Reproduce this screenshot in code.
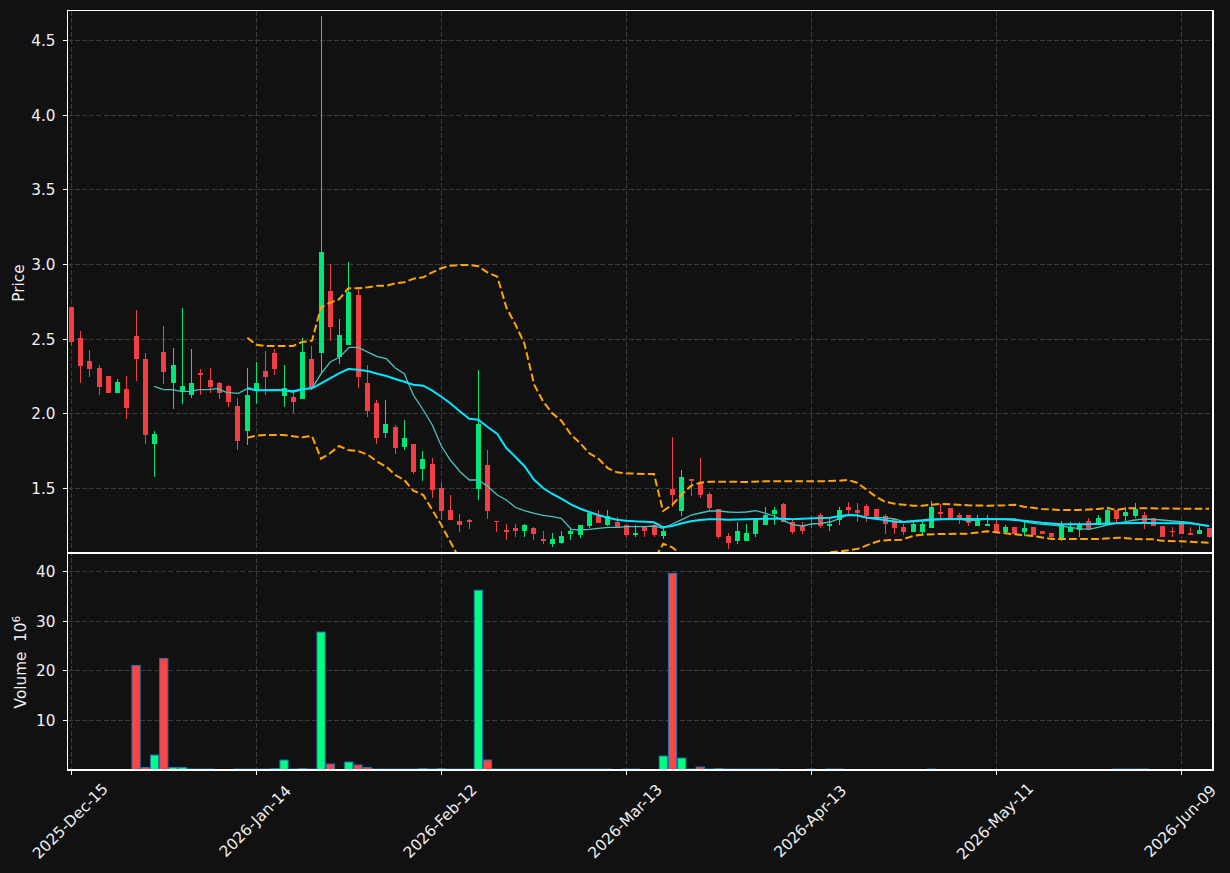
// OHLC-style chart drawn in screen pixels: [up, bodyTop, bodyBottom, wickTop, wickBottom]
const candles = [
  [0, 307, 342, 307, 345], [0, 338, 366, 331, 383], [0, 361, 369, 350, 377], [0, 368, 387, 365, 395],
  [0, 376, 393, 376, 393], [1, 382, 393, 379, 393], [0, 389, 408, 376, 419], [0, 336, 359, 310, 381],
  [0, 359, 435, 353, 444], [1, 434, 444, 431, 477], [0, 352, 372, 326, 384], [1, 365, 383, 348, 409],
  [1, 386, 392, 308, 404], [1, 383, 395, 349, 398], [0, 373, 375, 369, 395], [0, 380, 387, 368, 393],
  [0, 383, 393, 382, 399], [0, 386, 402, 385, 407], [0, 406, 441, 398, 450], [1, 395, 431, 368, 445],
  [1, 383, 391, 362, 404], [0, 371, 377, 351, 395], [0, 353, 369, 349, 375], [1, 388, 396, 365, 407],
  [0, 397, 402, 392, 413], [1, 352, 399, 338, 399], [0, 359, 388, 346, 390], [1, 252, 353, 16, 373],
  [0, 291, 327, 264, 341], [1, 335, 357, 319, 364], [1, 292, 345, 262, 345], [0, 295, 377, 287, 388],
  [0, 383, 411, 365, 417], [0, 403, 438, 400, 444], [1, 424, 433, 400, 438], [0, 427, 448, 425, 454],
  [1, 438, 447, 420, 450], [0, 444, 472, 444, 474], [1, 459, 469, 451, 481], [0, 464, 490, 458, 498],
  [0, 488, 511, 483, 520], [0, 510, 520, 495, 520], [0, 521, 525, 514, 532], [0, 520, 522, 519, 529],
  [1, 424, 489, 370, 500], [0, 465, 511, 450, 519], [0, 521, 522, 521, 532], [0, 530, 532, 524, 540],
  [0, 528, 531, 524, 537], [1, 525, 531, 524, 537], [0, 528, 534, 527, 540], [0, 539, 541, 531, 544],
  [1, 539, 544, 533, 547], [1, 536, 543, 531, 544], [1, 531, 534, 529, 540], [1, 525, 535, 525, 538],
  [1, 513, 526, 512, 528], [0, 516, 523, 510, 523], [1, 516, 525, 510, 526], [0, 522, 528, 517, 528],
  [0, 525, 535, 525, 537], [1, 533, 535, 525, 537], [0, 526, 531, 526, 537], [0, 525, 535, 524, 537],
  [1, 531, 536, 526, 539], [0, 489, 495, 437, 507], [1, 477, 511, 470, 516], [0, 479, 481, 479, 496],
  [0, 483, 495, 458, 498], [0, 494, 508, 492, 510], [0, 509, 537, 509, 539], [0, 536, 543, 533, 549],
  [1, 531, 541, 522, 544], [1, 533, 541, 524, 541], [1, 519, 534, 519, 537], [1, 515, 525, 507, 525],
  [1, 510, 514, 507, 525], [0, 504, 522, 503, 522], [0, 522, 532, 520, 534], [0, 526, 531, 522, 534],
  [0, 518, 519, 516, 528], [0, 515, 526, 513, 528], [1, 524, 526, 518, 531], [1, 510, 520, 507, 525],
  [0, 507, 510, 502, 514], [0, 510, 513, 503, 522], [0, 506, 516, 504, 522], [0, 509, 518, 509, 518],
  [0, 516, 524, 514, 534], [0, 519, 528, 519, 534], [0, 527, 532, 524, 535], [1, 524, 532, 522, 532],
  [1, 524, 532, 522, 534], [1, 507, 528, 501, 528], [0, 512, 514, 504, 518], [0, 508, 519, 508, 519],
  [0, 515, 519, 513, 524], [0, 515, 523, 515, 526], [1, 519, 526, 515, 526], [1, 524, 526, 515, 526],
  [0, 524, 532, 520, 532], [1, 527, 532, 525, 534], [0, 527, 534, 527, 534], [1, 528, 532, 522, 536],
  [0, 527, 535, 527, 535], [0, 531, 534, 531, 534], [0, 533, 537, 533, 540], [1, 525, 538, 521, 541],
  [1, 527, 532, 522, 532], [1, 525, 530, 522, 537], [0, 521, 529, 518, 530], [1, 518, 525, 515, 525],
  [1, 510, 525, 508, 525], [0, 510, 519, 510, 522], [1, 512, 516, 507, 521], [1, 509, 516, 503, 518],
  [0, 515, 523, 512, 529], [0, 518, 526, 518, 526], [0, 526, 537, 526, 537], [0, 531, 532, 527, 537],
  [0, 521, 534, 521, 534], [0, 533, 535, 527, 535], [1, 530, 534, 526, 534], [0, 528, 537, 528, 538],
];

const thinLine = "154.3,386.3 163.3,389.7 172.3,389.7 181.3,391.3 190.3,391.3 199.3,389.7 208.3,389.7 217.3,388.7 226.3,392.3 238.3,393.3 247.3,388.7 256.3,390.3 265.3,390.3 275,390.3 284,390.3 293,392.3 302.3,389.3 312.3,387.7 321.3,373.3 330.3,362 339.3,357.3 349.3,347.3 358.3,347.3 368.3,352.3 377.3,356.7 386.3,358.7 395.3,368 404.3,373.7 413.3,395 423.3,410 432.3,425 441.3,446 450.3,460 460.3,472 469.3,480 478.3,480 487.3,486 497.3,495 506.3,500 515.3,507.3 524.3,510.7 534.3,513.3 543.3,515.3 552.3,516.7 561.3,518.3 571.3,529.3 580.3,530 589.3,529.3 598.3,528.3 608.3,527.3 617.3,527.3 626.3,526.7 635.3,526.7 645.3,526.7 654.3,526 663.3,528.3 672.3,524 682.3,519.3 691.3,515 700.3,513 709.3,511 719,511 728.3,512 737.3,512.3 746.3,512 756,510.7 765.3,513.3 774.3,516 783.3,520.7 792.7,524.7 802.3,526 811.3,524 820.3,523.3 830,522 839.3,518.7 848,515 857,515.7 866.8,517.7 876,517.7 885,517.7 894.5,519 903.8,521.7 913,520.7 922,520 931.5,519 941,519 950,519 959,519 968,520.7 978,520 987,519 996,519 1005,519 1015,519 1024,521.7 1033,523.3 1042,524.3 1052,525 1061,526 1070,527.3 1079,528.7 1089,529.3 1098,527.3 1107,525 1116,523.3 1126,521.7 1135,520 1144,519 1153,519.3 1162,520 1172,521 1181,521.7 1190,522.3 1199,524.3 1209,526";

const thickLine = "247.3,388 256.3,390.3 265,390.3 275,390 284,390.3 293,391.3 302,389.3 312,388.3 321,383.3 330,378.3 339,373.3 348.3,369 358,369.7 368.3,371.3 377.3,373.7 386.3,376 395.3,379 404.3,381.7 413.3,384.7 423.3,385.7 432.3,390.7 441.3,396.7 450.3,403.3 460.3,411.7 469.3,418.7 478.3,419.7 487.3,426.7 497.3,434 506.3,448 515.3,456.7 524.3,466 534.3,480 543.3,488.3 552.3,494 561.3,498.7 571.3,504.7 580.3,508.7 589.3,512 598,515 608,517.7 617,519.7 626,520.7 635,521.3 645,521.7 654,522.3 663,527.3 672,526 682,523.3 691,521.3 700,520 709,519.3 719,519.3 728,519.7 746,519.3 765,518.7 783,518.7 793,519.3 802,518.7 820,518 830,517.7 839,516.3 848,515 857,515.3 867,517.7 885,520 894.5,521.7 904,522 922,520.7 941,519.3 968,519 1005,519.3 1024,520.7 1042,522.7 1061,524.3 1089,524.3 1116,523.3 1144,523 1172,523.3 1190,523.3 1209,526";

const upperBand = "247.3,337.7 256.3,344.7 265.3,346 275,346 284,346 293,346 302,342 312,340.7 321,307.3 330,302.7 339,299.3 348.3,288.3 358,288.3 368.3,287.3 377.3,285.7 386.3,285.7 395.3,283.3 404.3,282.3 413.3,278.7 423.3,277.3 432.3,272.3 441.3,268.3 450.3,265.7 460.3,265 469.3,265 478.3,266.3 487.3,272.3 497.3,276.7 506.3,307.3 515.3,324.3 524.3,343.3 534.3,385 543.3,401.7 552.3,413.3 561.3,420.7 571.3,435 580.3,443.3 589.3,453.3 598,458.3 608,468.3 617,472.3 626,473.3 645,474 654,474 663,511 672,505 682,494.3 691,485.7 700,482.7 709,481.7 728,481.7 746,482 765,481.3 783,481.3 802,481.3 820,481.3 839,480.7 848,480 857,482.7 867,490 876,496.7 885,501.7 894.5,503.7 904,504.7 913,505.7 922,505.7 931,504.7 941,504 950,504.3 968,505.3 987,505.7 1005,505.3 1015,504.7 1024,506.7 1033,507.7 1042,509 1061,510 1079,510 1098,509 1107,507.7 1116,510 1126,508.3 1144,508.3 1181,508.7 1209,508.7";

const lowerBand = "247.3,437.7 256.3,435.7 265,435 284,435 293,436.3 302,437.3 312,436 321,458.7 330,453.3 339,446 348,450 358,451 368.3,455 377.3,461.7 386.3,466.7 395.3,475 404.3,480 413.3,490.7 423.3,495 432.3,510 441.3,525 450.3,541.7 460,560 654,560 663.3,543.7 672.3,547.3 685,558 800,558 826.7,552.7 840,551.3 850,550 860,548.3 870,544 880,540.7 890,540 901.7,539.7 913,536 922,534.7 940,534 968,533.7 987,531.3 996,532.3 1015,534.3 1033,536 1052,539 1079,539 1098,539 1119,537.7 1135,539 1153,539.3 1162,540.7 1181,541.3 1209,542.7";

// volumes in millions, by bar index
const volumes = {
  7: [0, 21], 8: [0, 0.5], 9: [1, 3], 10: [0, 22.4], 11: [1, 0.5], 12: [1, 0.5], 22: [0, 0.3], 23: [1, 2],
  25: [1, 0.3], 27: [1, 27.7], 28: [0, 1.2], 30: [1, 1.6], 31: [0, 1], 32: [0, 0.5], 38: [1, 0.3], 40: [0, 0.3],
  44: [1, 36.1], 45: [0, 2], 46: [0, 0.2], 64: [1, 2.8], 65: [0, 39.5], 66: [1, 2.4], 67: [0, 0.2], 68: [0, 0.6],
  70: [0, 0.3],
};
const tinyRanges = [[13, 15], [18, 21], [24, 24], [26, 26], [33, 37], [39, 39], [41, 43], [47, 58], [60, 61], [69, 69], [71, 76], [80, 80], [82, 83], [93, 93], [113, 116]];
tinyRanges.forEach(([a, b]) => {
  for (let i = a; i <= b; i++) volumes[i] = [candles[i][0], 0.2];
});

const barX = (i) => 71.3 + 9.25 * i;

const priceTicks = [["4.5", 40.5], ["4.0", 115.5], ["3.5", 189.5], ["3.0", 264.5], ["2.5", 339.5], ["2.0", 413.5], ["1.5", 488.5]];
const volumeTicks = [["40", 571.5], ["30", 621.5], ["20", 670.5], ["10", 720.5]];
const dateTicks = [
  ["2025-Dec-15", 71.5], ["2026-Jan-14", 256.5], ["2026-Feb-12", 441.5], ["2026-Mar-13", 626.5],
  ["2026-Apr-13", 811.5], ["2026-May-11", 996.5], ["2026-Jun-09", 1181.5],
];

function Candle({ data, i }) {
  const [up, top, bottom, wickTop, wickBottom] = data;
  // snap to the pixel grid so the wick stays one pixel wide
  const x = Math.floor(barX(i)) + 0.5;
  return (
    <g className={up ? "fill-[#00e676] stroke-[#00e676]" : "fill-[#f23f45] stroke-[#f23f45]"} shapeRendering="crispEdges">
      <line x1={x} x2={x} y1={wickTop} y2={wickBottom} strokeWidth="1" />
      <rect x={x - 2.5} y={top} width="5" height={bottom - top} strokeWidth="0" />
    </g>
  );
}

function VolumeBar({ i, up, value }) {
  const h = value * 4.98;
  return (
    <rect
      x={barX(i) - 4.1}
      y={770 - h}
      width="8.2"
      height={h}
      strokeWidth="1"
      className={up ? "fill-[#00ff7f] stroke-[#1f77b4]" : "fill-[#ff4444] stroke-[#1f77b4]"}
    />
  );
}

export default function App() {
  return (
    <div className="w-[1230px] h-[873px] bg-[#111111] overflow-hidden">
      <svg width="1230" height="873" viewBox="0 0 1230 873" className="font-['DejaVu_Sans',sans-serif]">
        <defs>
          <clipPath id="priceClip">
            <rect x="67.5" y="10.5" width="1145.5" height="542.5" />
          </clipPath>
          <clipPath id="volumeClip">
            <rect x="67.5" y="553" width="1145.5" height="217" />
          </clipPath>
        </defs>

        {/* grid */}
        <g className="stroke-[#3a3a3a]" strokeWidth="1" strokeDasharray="5 2.2" shapeRendering="crispEdges">
          {priceTicks.concat(volumeTicks).map(([label, y]) => (
            <line key={label} x1="67.5" x2="1213" y1={y} y2={y} />
          ))}
          {dateTicks.map(([label, x]) => (
            <line key={label} x1={x} x2={x} y1="10.5" y2="770" />
          ))}
        </g>

        {/* price panel */}
        <g clipPath="url(#priceClip)">
          {candles.map((c, i) => (
            <Candle key={i} data={c} i={i} />
          ))}
          <polyline points={upperBand} fill="none" strokeWidth="2" strokeDasharray="7.7 3.3" className="stroke-[#ffa500]" />
          <polyline points={lowerBand} fill="none" strokeWidth="2" strokeDasharray="7.7 3.3" className="stroke-[#ffa500]" />
          <polyline points={thinLine} fill="none" strokeWidth="1.3" className="stroke-[#45c4bf]" />
          <polyline points={thickLine} fill="none" strokeWidth="2" className="stroke-[#00e8ff]" />
        </g>

        {/* volume panel */}
        <g clipPath="url(#volumeClip)">
          {Object.entries(volumes).map(([i, [up, value]]) => (
            <VolumeBar key={i} i={Number(i)} up={up} value={value} />
          ))}
        </g>

        {/* axes frame */}
        <g className="stroke-white" fill="none" strokeWidth="1.2" shapeRendering="crispEdges">
          <rect x="67.5" y="10.5" width="1145.5" height="759.5" />
          <line x1="67.5" x2="1213" y1="553" y2="553" />
          {priceTicks.concat(volumeTicks).map(([label, y]) => (
            <line key={label} x1="62.5" x2="67.5" y1={y} y2={y} />
          ))}
          {dateTicks.map(([label, x]) => (
            <line key={label} x1={x} x2={x} y1="770" y2="775" />
          ))}
        </g>

        {/* labels */}
        <g className="fill-[#f0f0f0] text-[15.28px]">
          {priceTicks.concat(volumeTicks).map(([label, y]) => (
            <text key={label} x="55.5" y={y + 5.5} textAnchor="end">
              {label}
            </text>
          ))}
          {dateTicks.map(([label, x]) => (
            <text key={label} x={x - 1.5} y="826.5" textAnchor="middle" transform={`rotate(-45 ${x - 1.5} 821)`}>
              {label}
            </text>
          ))}
          <text x="23.5" y="283" textAnchor="middle" transform="rotate(-90 23.5 283)">
            Price
          </text>
          <text x="26" y="662" textAnchor="middle" transform="rotate(-90 26 662)">
            Volume{"\u00a0\u00a0"}10
            <tspan dy="-6" className="text-[10.7px]">6</tspan>
          </text>
        </g>
      </svg>
    </div>
  );
}
